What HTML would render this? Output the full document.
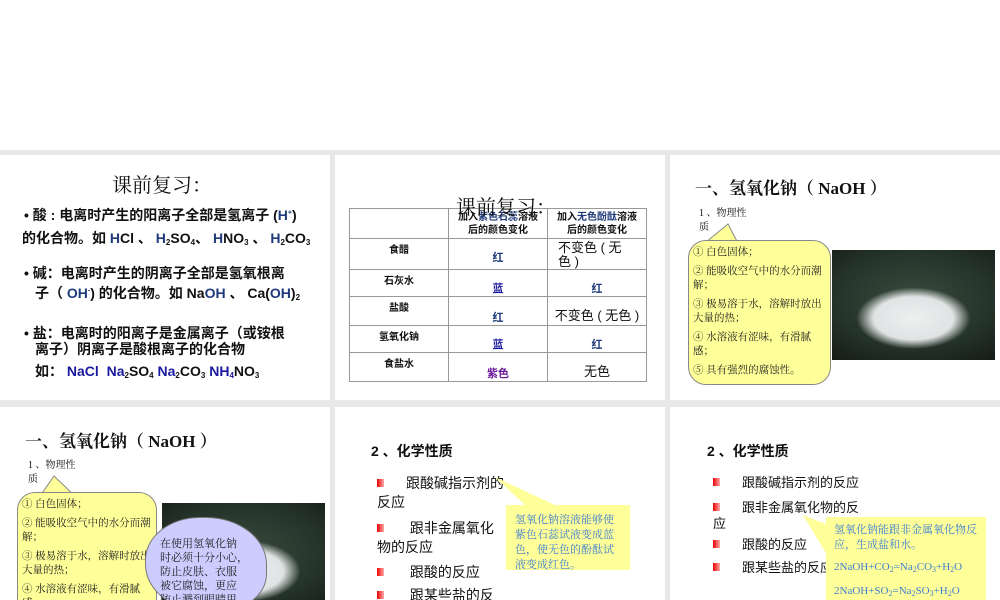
<!DOCTYPE html>
<html><head><meta charset="utf-8"><style>
*{margin:0;padding:0;box-sizing:border-box}
body{width:1000px;height:600px;overflow:hidden;background:#e8e8e8;position:relative;font-family:"Liberation Sans","Noto Sans CJK SC",sans-serif;color:#111}
.a{position:absolute}
.s{position:absolute;background:#fff;overflow:hidden}
.b{color:#1f3a7a}
.bb{color:#1a1aa0}
.serif{font-family:"Liberation Serif","Noto Serif CJK SC",serif}
sub{font-size:8px;vertical-align:-2px}
sup{font-size:7px}
.t1 p{position:absolute;left:24px;font-size:14px;font-weight:bold;white-space:nowrap}
table{border-collapse:collapse;position:absolute;left:14px;top:53px;width:298px;font-size:10px;table-layout:fixed}
td{border:1px solid #999;height:27px;text-align:center;vertical-align:top;font-weight:bold;padding-top:2px;width:99px}
.bul{position:absolute;font-size:14px;white-space:nowrap}
.bul i{display:inline-block;width:7px;height:8px;background:linear-gradient(90deg,#e00,#faa);margin-right:22px;vertical-align:1px}
.note{position:absolute;background:#ffff99;color:#3f7fd0;font-size:11px;line-height:15px;font-family:"Liberation Serif","Noto Serif CJK SC",serif}
.y{position:absolute;background:#ffff99;border:1px solid #888;border-radius:18px;font-family:"Liberation Serif","Noto Serif CJK SC",serif;font-size:10.5px;line-height:14px;padding:5px 4px;color:#222}
.y p{margin-bottom:5px}
.img{position:absolute;background:radial-gradient(ellipse 35% 28% at 50% 62%,#eef0f0 0,#dfe3e3 70%,rgba(40,55,45,0) 100%),radial-gradient(ellipse 80% 70% at 50% 45%,#3a4a3e 0,#25342a 60%,#151c17 100%)}
</style></head><body>
<div class="a" style="left:0;top:0;width:1000px;height:150px;background:#fff"></div>

<!-- slide 1 -->
<div class="s t1" style="left:0;top:155px;width:330px;height:245px">
<div class="a serif" style="left:112px;top:14px;font-size:20px">课前复习：</div>
<p style="top:50px">• 酸 : 电离时产生的阳离子全部是氢离子 (<span class="b">H<sup>+</sup></span>)</p>
<p style="top:73px;left:22px">的化合物。如 <span class="b">H</span>Cl 、 <span class="b">H</span><sub>2</sub>SO<sub>4</sub>、 <span class="b">H</span>NO<sub>3</sub> 、 <span class="b">H</span><sub>2</sub>CO<sub>3</sub></p>
<p style="top:108px">• 碱：电离时产生的阴离子全部是氢氧根离</p>
<p style="top:128px;left:35px">子（ <span class="b">OH<sup>-</sup></span>) 的化合物。如 Na<span class="b">OH</span> 、 Ca(<span class="b">OH</span>)<sub>2</sub></p>
<p style="top:168px">• 盐：电离时的阳离子是金属离子（或铵根</p>
<p style="top:184px;left:35px">离子）阴离子是酸根离子的化合物</p>
<p style="top:206px;left:35px">如： <span class="bb">NaCl</span> &nbsp;<span class="bb">Na</span><sub>2</sub>SO<sub>4</sub> <span class="bb">Na</span><sub>2</sub>CO<sub>3</sub> <span class="bb">NH<sub>4</sub></span>NO<sub>3</sub></p>
</div>

<!-- slide 2 -->
<div class="s" style="left:335px;top:155px;width:330px;height:245px">
<table>
<tr><td style="height:30px"></td><td style="line-height:13px">加入<span class="b">紫色石蕊</span>溶液<br>后的颜色变化</td><td style="line-height:13px">加入<span class="b">无色酚酞</span>溶液<br>后的颜色变化</td></tr>
<tr><td>食醋</td><td class="b" style="padding-top:10px;font-size:11px">红</td><td style="font-size:13px;font-weight:normal;text-align:left;padding-left:10px;line-height:14px">不变色 ( 无<br>色 )</td></tr>
<tr><td>石灰水</td><td class="bb" style="padding-top:10px;font-size:11px">蓝</td><td class="b" style="padding-top:10px;font-size:11px">红</td></tr>
<tr><td>盐酸</td><td class="b" style="padding-top:12px;font-size:11px">红</td><td style="font-size:13px;font-weight:normal;padding-top:8px">不变色 ( 无色 )</td></tr>
<tr><td>氢氧化钠</td><td class="bb" style="padding-top:10px;font-size:11px">蓝</td><td class="b" style="padding-top:10px;font-size:11px">红</td></tr>
<tr><td>食盐水</td><td style="color:#6a1a9a;padding-top:12px;font-size:11px">紫色</td><td style="font-size:13px;font-weight:normal;padding-top:8px">无色</td></tr>
</table>
<div class="a serif" style="left:121px;top:36px;font-size:20px">课前复习：</div>
</div>

<!-- slide 3 -->
<div class="s" style="left:670px;top:155px;width:330px;height:245px">
<div class="a serif" style="left:25px;top:19px;font-size:17px;font-weight:bold">一、氢氧化钠（ NaOH ）</div>
<div class="a serif" style="left:29px;top:52px;font-size:10px;line-height:14px">1 、物理性<br>质</div>
<svg class="a" style="left:30px;top:67px" width="40" height="25"><polygon points="0,25 28,2 40,25" fill="#ffff99" stroke="#888"/></svg>
<div class="y" style="left:18px;top:85px;width:143px;height:145px"><p>① 白色固体；</p><p>② 能吸收空气中的水分而潮解；</p><p>③ 极易溶于水，溶解时放出大量的热；</p><p>④ 水溶液有涩味，有滑腻感；</p><p>⑤ 具有强烈的腐蚀性。</p></div>
<div class="img" style="left:162px;top:95px;width:163px;height:110px"></div>
</div>

<!-- slide 4 -->
<div class="s" style="left:0;top:407px;width:330px;height:193px">
<div class="a serif" style="left:25px;top:20px;font-size:17px;font-weight:bold">一、氢氧化钠（ NaOH ）</div>
<div class="a serif" style="left:28px;top:52px;font-size:10px;line-height:14px">1 、物理性<br>质</div>
<svg class="a" style="left:38px;top:67px" width="40" height="25"><polygon points="0,25 16,2 40,25" fill="#ffff99" stroke="#888"/></svg>
<div class="y" style="left:17px;top:85px;width:140px;height:140px"><p>① 白色固体；</p><p>② 能吸收空气中的水分而潮解；</p><p>③ 极易溶于水，溶解时放出大量的热；</p><p>④ 水溶液有涩味，有滑腻感；</p></div>
<div class="img" style="left:162px;top:96px;width:163px;height:110px"></div>
<div class="a" style="left:145px;top:110px;width:122px;height:95px;background:#ccccff;border:1px solid #777;border-radius:45% 50% 40% 50%"></div>
<div class="a serif" style="left:160px;top:130px;font-size:11px;line-height:14px;color:#222">在使用氢氧化钠<br>时必须十分小心，<br>防止皮肤、衣服<br>被它腐蚀，更应<br>防止溅到眼睛里。</div>
</div>

<!-- slide 5 -->
<div class="s" style="left:335px;top:407px;width:330px;height:193px">
<div class="a" style="left:36px;top:34px;font-size:14px;font-weight:bold">2 、化学性质</div>
<div class="bul" style="left:42px;top:66px"><i></i>跟酸碱指示剂的</div>
<div class="bul" style="left:42px;top:85px">反应</div>
<div class="bul" style="left:42px;top:111px"><i></i>&nbsp;跟非金属氧化</div>
<div class="bul" style="left:42px;top:130px">物的反应</div>
<div class="bul" style="left:42px;top:155px"><i></i>&nbsp;跟酸的反应</div>
<div class="bul" style="left:42px;top:178px"><i></i>&nbsp;跟某些盐的反</div>
<svg class="a" style="left:160px;top:70px" width="60" height="30"><polygon points="0,0 60,28 30,28" fill="#ffff99"/></svg>
<div class="note" style="left:171px;top:98px;width:124px;height:65px;padding:8px 9px">氢氧化钠溶液能够使紫色石蕊试液变成蓝色，使无色的酚酞试液变成红色。</div>
</div>

<!-- slide 6 -->
<div class="s" style="left:670px;top:407px;width:330px;height:193px">
<div class="a" style="left:37px;top:34px;font-size:14px;font-weight:bold">2 、化学性质</div>
<div class="bul" style="left:43px;top:65px;font-size:13px"><i></i>跟酸碱指示剂的反应</div>
<div class="bul" style="left:43px;top:90px;font-size:13px"><i></i>跟非金属氧化物的反</div>
<div class="bul" style="left:43px;top:106px;font-size:13px">应</div>
<div class="bul" style="left:43px;top:127px;font-size:13px"><i></i>跟酸的反应</div>
<div class="bul" style="left:43px;top:150px;font-size:13px"><i></i>跟某些盐的反应</div>
<svg class="a" style="left:133px;top:108px" width="30" height="60"><polygon points="0,0 30,12 30,50" fill="#ffff99"/></svg>
<div class="note" style="left:156px;top:110px;width:160px;height:83px;padding:6px 8px">氢氧化钠能跟非金属氧化物反应，生成盐和水。<div style="margin-top:7px">2NaOH+CO<sub>2</sub>=Na<sub>2</sub>CO<sub>3</sub>+H<sub>2</sub>O</div><div style="margin-top:7px">2NaOH+SO<sub>2</sub>=Na<sub>2</sub>SO<sub>3</sub>+H<sub>2</sub>O</div></div>
</div>
</body></html>
